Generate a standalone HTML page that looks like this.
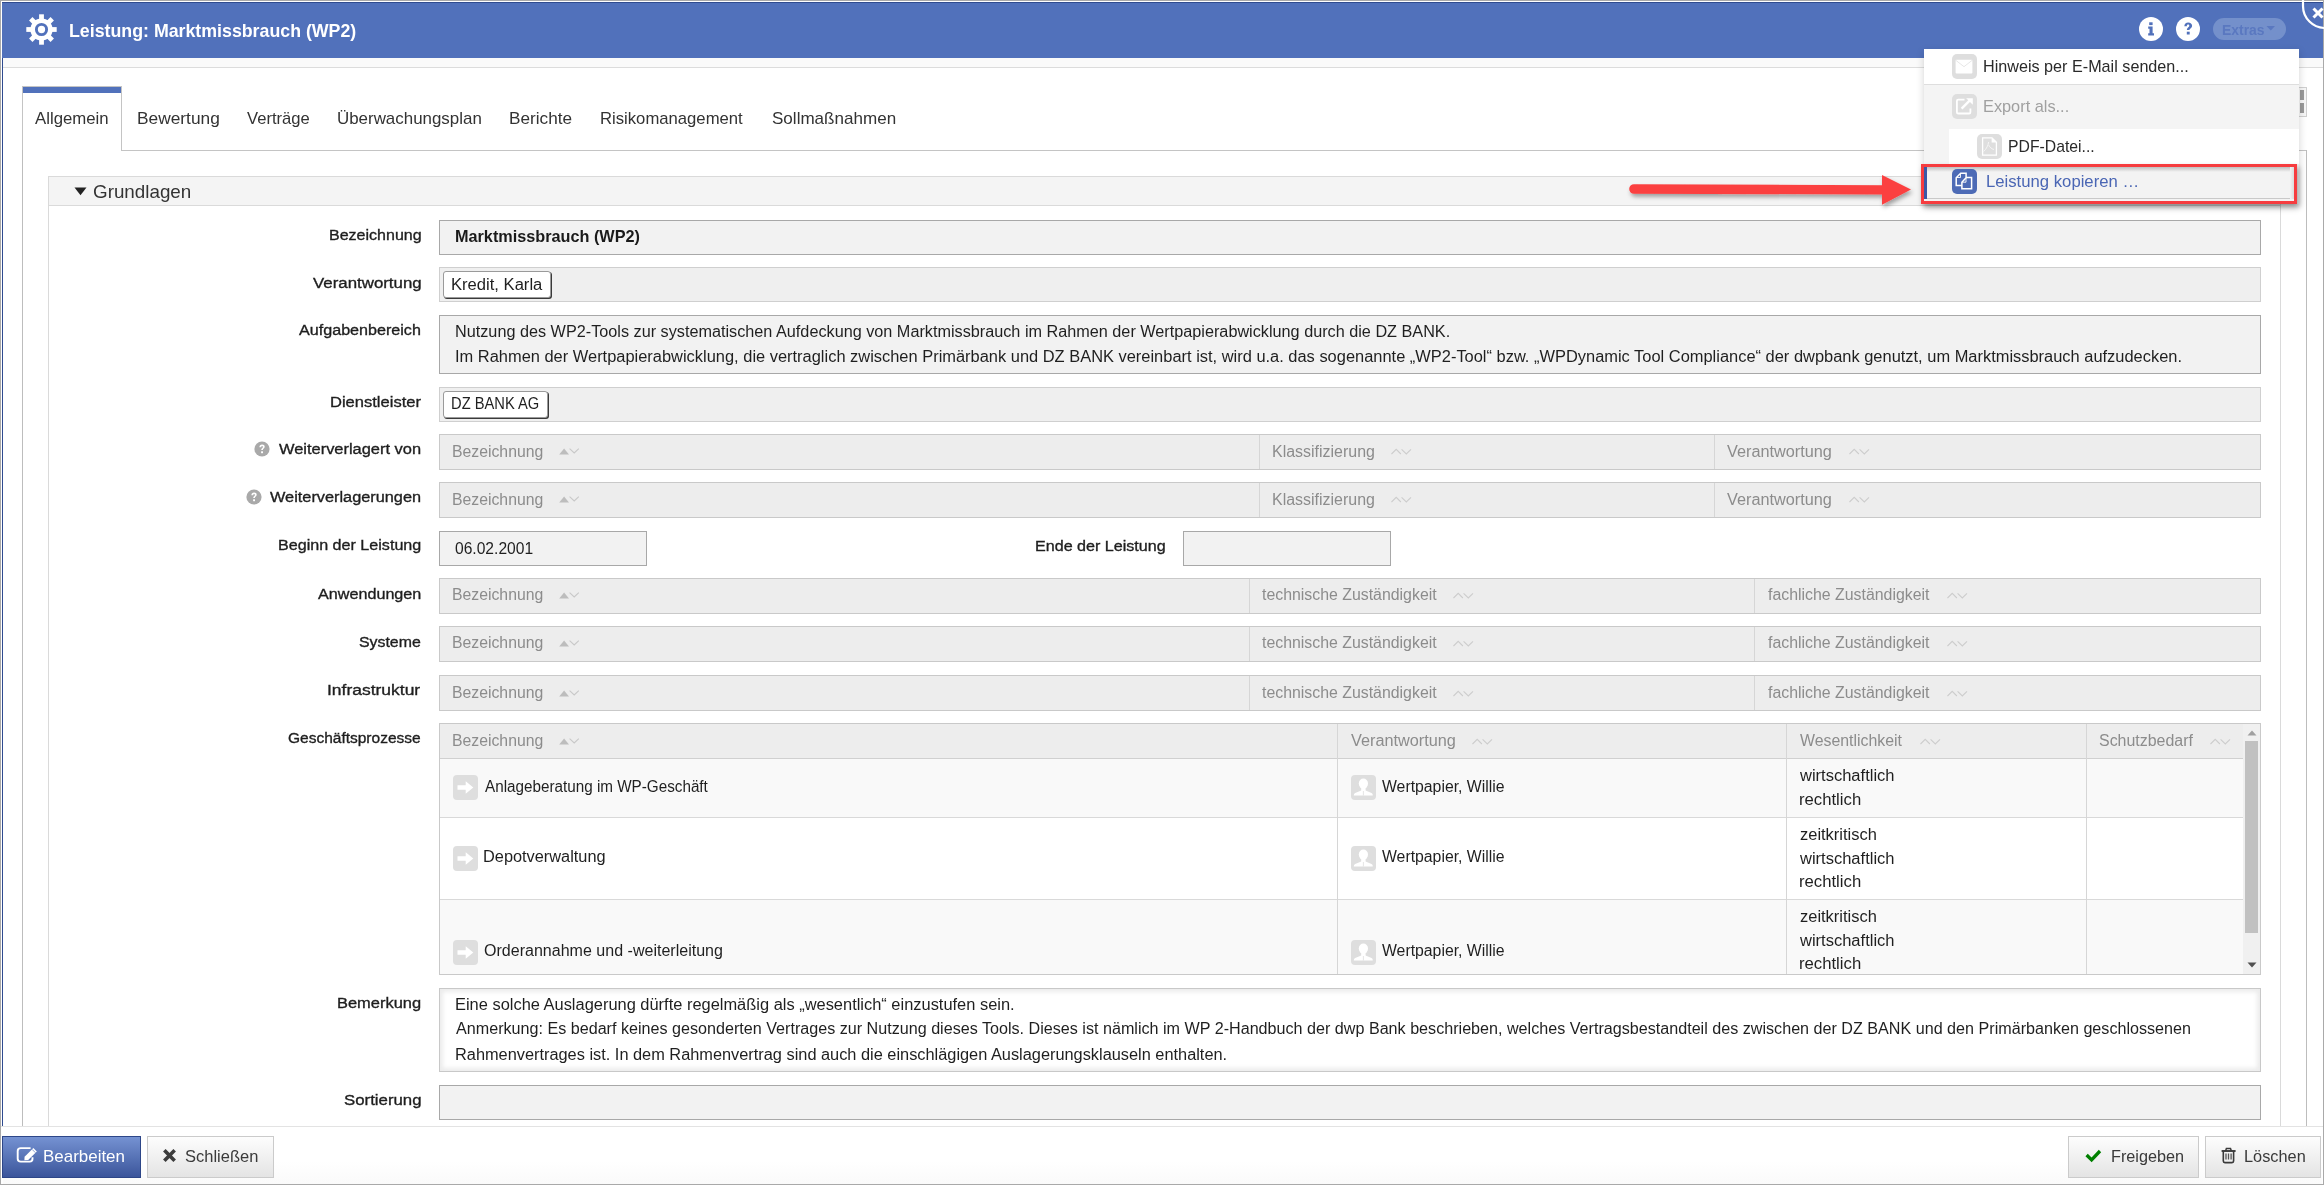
<!DOCTYPE html>
<html><head><meta charset="utf-8"><title>Leistung: Marktmissbrauch (WP2)</title>
<style>
html,body{margin:0;padding:0;}
body{width:2324px;height:1185px;position:relative;overflow:hidden;background:#fff;font-family:"Liberation Sans",sans-serif;}
.a{position:absolute;box-sizing:border-box;}
.t{position:absolute;white-space:pre;transform-origin:0 0;font-family:"Liberation Sans",sans-serif;}
.fld{position:absolute;box-sizing:border-box;background:#f2f2f2;border:1px solid #a8a8a8;}
.fl2{position:absolute;box-sizing:border-box;background:#efefef;border:1px solid #cfcfcf;}
.th{position:absolute;box-sizing:border-box;background:#ededed;border:1px solid #c9c9c9;}
.vd{position:absolute;width:1px;background:#d6d6d6;}
.hl{position:absolute;height:1px;background:#d9d9d9;}
.tag{position:absolute;box-sizing:border-box;background:#fff;border:1px solid #9a9a9a;border-radius:3px;box-shadow:1px 1px 0 #3a3a3a;}
.ico{position:absolute;}
</style></head><body>
<!-- window frame -->
<div class=a style="left:0;top:0;width:2324px;height:1185px;border:1px solid #a9a9a9;"></div>
<!-- left blue content border -->
<div class=a style="left:2px;top:2px;width:1px;height:1124px;background:#2f4b8f;"></div>
<!-- header -->
<div class=a style="left:2px;top:2px;width:2321px;height:56px;background:#5171bb;border-top:1px solid #2f4b8f;"></div>
<!-- strip under header -->
<div class=a style="left:3px;top:58px;width:2320px;height:10px;background:#fafafa;border-bottom:1px solid #dcdcdc;"></div>
<!-- gear icon -->
<svg class=ico style="left:26px;top:14px" width="31" height="31" viewBox="-15.5 -15.5 31 31">
 <g fill="#fff">
  <circle r="11.1"/>
  <rect x="-2.4" y="-15.2" width="4.8" height="7" />
  <rect x="-2.4" y="-15.2" width="4.8" height="7" transform="rotate(45)"/>
  <rect x="-2.4" y="-15.2" width="4.8" height="7" transform="rotate(90)"/>
  <rect x="-2.4" y="-15.2" width="4.8" height="7" transform="rotate(135)"/>
  <rect x="-2.4" y="-15.2" width="4.8" height="7" transform="rotate(180)"/>
  <rect x="-2.4" y="-15.2" width="4.8" height="7" transform="rotate(225)"/>
  <rect x="-2.4" y="-15.2" width="4.8" height="7" transform="rotate(270)"/>
  <rect x="-2.4" y="-15.2" width="4.8" height="7" transform="rotate(315)"/>
 </g>
 <circle r="5.1" fill="none" stroke="#5171bb" stroke-width="2.9"/>
</svg>
<!-- info / help -->
<div class=a style="left:2139px;top:17px;width:24px;height:24px;border-radius:50%;background:#fff;"></div>
<svg class=ico style="left:2139px;top:17px" width="24" height="24" viewBox="0 0 24 24">
 <rect x="10.2" y="5.3" width="3.4" height="2.8" fill="#5171bb"/>
 <path d="M9.2 9.6h4.4v6.6h1.4v2.2H9.2v-2.2h1.3v-4.4H9.2z" fill="#5171bb"/>
</svg>
<div class=a style="left:2176px;top:17px;width:24px;height:24px;border-radius:50%;background:#fff;"></div>
<svg class=ico style="left:2176px;top:17px" width="24" height="24" viewBox="0 0 24 24">
 <path d="M8.3 9.2c0-2.4 1.7-3.8 3.9-3.8 2.3 0 3.9 1.3 3.9 3.3 0 2.4-2.6 2.7-2.6 4.4h-2.6c0-2.6 2.4-2.9 2.4-4.3 0-.8-.5-1.3-1.2-1.3-.8 0-1.3.6-1.3 1.7z" fill="#5171bb"/>
 <rect x="10.8" y="14.7" width="2.9" height="2.8" fill="#5171bb"/>
</svg>
<!-- extras pill -->
<div class=a style="left:2213px;top:18px;width:73px;height:22px;border-radius:11px;background:#7490cb;"></div>
<svg class=ico style="left:2266px;top:25px" width="10" height="7" viewBox="0 0 10 7"><path d="M0.5 1h8.5L4.75 5.5z" fill="#5a78c0"/></svg>
<!-- close -->
<svg class=ico style="left:2290px;top:0px" width="34" height="34" viewBox="0 0 34 34">
 <path d="M13 0V6A22 22 0 0 0 35 28" fill="none" stroke="#fff" stroke-width="2.2"/>
 <path d="M23.5 8.5l9 9M32.5 8.5l-9 9" stroke="#fff" stroke-width="3"/>
</svg>

<!-- tab strip -->
<div class=a style="left:22px;top:86px;width:100px;height:65px;border:1px solid #c4c4c4;border-bottom:none;background:#fff;"></div>
<div class=a style="left:23px;top:87px;width:98px;height:6px;background:#5171bb;"></div>
<div class=a style="left:121px;top:150px;width:2186px;height:1px;background:#c4c4c4;"></div>
<div class=a style="left:22px;top:150px;width:1px;height:976px;background:#bdbdbd;"></div>
<div class=a style="left:2306px;top:150px;width:1px;height:976px;background:#bdbdbd;"></div>
<!-- small scroll element right of tabs -->
<div class=a style="left:2297px;top:87px;width:10px;height:30px;border:1px solid #d0d0d0;background:#f7f7f7;"></div>
<div class=a style="left:2300px;top:90px;width:4px;height:10px;background:#9a9a9a;"></div>
<div class=a style="left:2300px;top:103px;width:4px;height:10px;background:#9a9a9a;"></div>

<!-- section panel -->
<div class=a style="left:48px;top:176px;width:2233px;height:960px;border:1px solid #dadada;"></div>
<div class=a style="left:49px;top:177px;width:2231px;height:29px;background:#f4f4f4;border-bottom:1px solid #dadada;"></div>
<svg class=ico style="left:74px;top:187px" width="13" height="9" viewBox="0 0 13 9"><path d="M0.5 0.5h12L6.5 8.3z" fill="#222"/></svg>

<!-- footer -->
<div class=a style="left:1px;top:1126px;width:2322px;height:58px;background:#fff;border-top:1px solid #e3e3e3;"></div>
<div class=a style="left:3px;top:1127px;width:2319px;height:57px;background:linear-gradient(#fff 0%,#fff 60%,#fafafa 100%);"></div>

<!-- fields -->
<div class=fld style="left:439px;top:220px;width:1822px;height:35px;"></div>
<div class=fl2 style="left:439px;top:267px;width:1822px;height:35px;"></div>
<div class=tag style="left:443px;top:271px;width:108px;height:27px;"></div>
<div class=fld style="left:439px;top:315px;width:1822px;height:59px;"></div>
<div class=fl2 style="left:439px;top:387px;width:1822px;height:35px;"></div>
<div class=tag style="left:443px;top:391px;width:105px;height:27px;"></div>

<!-- table headers simple -->
<div class=th style="left:439px;top:434px;width:1822px;height:36px;"></div>
<div class=vd style="left:1259px;top:435px;height:34px;"></div>
<div class=vd style="left:1714px;top:435px;height:34px;"></div>
<div class=th style="left:439px;top:482px;width:1822px;height:36px;"></div>
<div class=vd style="left:1259px;top:483px;height:34px;"></div>
<div class=vd style="left:1714px;top:483px;height:34px;"></div>

<div class=fld style="left:439px;top:531px;width:208px;height:35px;"></div>
<div class=fld style="left:1183px;top:531px;width:208px;height:35px;"></div>

<div class=th style="left:439px;top:578px;width:1822px;height:36px;"></div>
<div class=vd style="left:1249px;top:579px;height:34px;"></div>
<div class=vd style="left:1754px;top:579px;height:34px;"></div>
<div class=th style="left:439px;top:626px;width:1822px;height:36px;"></div>
<div class=vd style="left:1249px;top:627px;height:34px;"></div>
<div class=vd style="left:1754px;top:627px;height:34px;"></div>
<div class=th style="left:439px;top:675px;width:1822px;height:36px;"></div>
<div class=vd style="left:1249px;top:676px;height:34px;"></div>
<div class=vd style="left:1754px;top:676px;height:34px;"></div>

<!-- Geschaeftsprozesse table -->
<div class=a style="left:439px;top:723px;width:1822px;height:252px;border:1px solid #c9c9c9;background:#fff;"></div>
<div class=a style="left:440px;top:724px;width:1803px;height:35px;background:#ededed;border-bottom:1px solid #d0d0d0;"></div>
<div class=a style="left:440px;top:759px;width:1803px;height:58px;background:#f9f9f9;"></div>
<div class=hl style="left:440px;top:817px;width:1803px;"></div>
<div class=hl style="left:440px;top:899px;width:1803px;"></div>
<div class=a style="left:440px;top:900px;width:1803px;height:74px;background:#f9f9f9;"></div>
<div class=vd style="left:1337px;top:724px;height:250px;"></div>
<div class=vd style="left:1786px;top:724px;height:250px;"></div>
<div class=vd style="left:2086px;top:724px;height:250px;"></div>
<!-- scrollbar -->
<div class=a style="left:2243px;top:724px;width:17px;height:250px;background:#f0f0f0;"></div>
<div class=a style="left:2245px;top:741px;width:13px;height:192px;background:#c1c1c1;"></div>
<svg class=ico style="left:2247px;top:729px" width="10" height="8" viewBox="0 0 10 8"><path d="M0.5 6.5h9L5 1.5z" fill="#a0a0a0"/></svg>
<svg class=ico style="left:2247px;top:961px" width="10" height="8" viewBox="0 0 10 8"><path d="M0.5 1.5h9L5 6.5z" fill="#505050"/></svg>

<!-- Bemerkung -->
<div class=a style="left:439px;top:988px;width:1822px;height:84px;border:1px solid #c8c8c8;background:#fff;box-shadow:inset 0 0 4px 3px #ececec;"></div>
<div class=fld style="left:439px;top:1085px;width:1822px;height:35px;"></div>
<!-- ============ sort icons ============ -->
<svg class=ico style="left:559px;top:448px" width="22" height="8" viewBox="0 0 22 8"><path d="M0.2 6.4L5.1 0.4L10 6.4z" fill="#bdbdbd"/><path d="M10.6 0.6L15.2 5L19.8 0.6" fill="none" stroke="#c8c8c8" stroke-width="1.1"/></svg>
<svg class=ico style="left:1391px;top:448px" width="22" height="8" viewBox="0 0 22 8"><path d="M0.5 6L5.2 1.3L9.9 6" fill="none" stroke="#cdcdcd" stroke-width="1.1"/><path d="M10.6 1.3L15.3 6L20 1.3" fill="none" stroke="#cdcdcd" stroke-width="1.1"/></svg>
<svg class=ico style="left:1849px;top:448px" width="22" height="8" viewBox="0 0 22 8"><path d="M0.5 6L5.2 1.3L9.9 6" fill="none" stroke="#cdcdcd" stroke-width="1.1"/><path d="M10.6 1.3L15.3 6L20 1.3" fill="none" stroke="#cdcdcd" stroke-width="1.1"/></svg>
<svg class=ico style="left:559px;top:496px" width="22" height="8" viewBox="0 0 22 8"><path d="M0.2 6.4L5.1 0.4L10 6.4z" fill="#bdbdbd"/><path d="M10.6 0.6L15.2 5L19.8 0.6" fill="none" stroke="#c8c8c8" stroke-width="1.1"/></svg>
<svg class=ico style="left:1391px;top:496px" width="22" height="8" viewBox="0 0 22 8"><path d="M0.5 6L5.2 1.3L9.9 6" fill="none" stroke="#cdcdcd" stroke-width="1.1"/><path d="M10.6 1.3L15.3 6L20 1.3" fill="none" stroke="#cdcdcd" stroke-width="1.1"/></svg>
<svg class=ico style="left:1849px;top:496px" width="22" height="8" viewBox="0 0 22 8"><path d="M0.5 6L5.2 1.3L9.9 6" fill="none" stroke="#cdcdcd" stroke-width="1.1"/><path d="M10.6 1.3L15.3 6L20 1.3" fill="none" stroke="#cdcdcd" stroke-width="1.1"/></svg>
<svg class=ico style="left:559px;top:592px" width="22" height="8" viewBox="0 0 22 8"><path d="M0.2 6.4L5.1 0.4L10 6.4z" fill="#bdbdbd"/><path d="M10.6 0.6L15.2 5L19.8 0.6" fill="none" stroke="#c8c8c8" stroke-width="1.1"/></svg>
<svg class=ico style="left:1453px;top:592px" width="22" height="8" viewBox="0 0 22 8"><path d="M0.5 6L5.2 1.3L9.9 6" fill="none" stroke="#cdcdcd" stroke-width="1.1"/><path d="M10.6 1.3L15.3 6L20 1.3" fill="none" stroke="#cdcdcd" stroke-width="1.1"/></svg>
<svg class=ico style="left:1947px;top:592px" width="22" height="8" viewBox="0 0 22 8"><path d="M0.5 6L5.2 1.3L9.9 6" fill="none" stroke="#cdcdcd" stroke-width="1.1"/><path d="M10.6 1.3L15.3 6L20 1.3" fill="none" stroke="#cdcdcd" stroke-width="1.1"/></svg>
<svg class=ico style="left:559px;top:640px" width="22" height="8" viewBox="0 0 22 8"><path d="M0.2 6.4L5.1 0.4L10 6.4z" fill="#bdbdbd"/><path d="M10.6 0.6L15.2 5L19.8 0.6" fill="none" stroke="#c8c8c8" stroke-width="1.1"/></svg>
<svg class=ico style="left:1453px;top:640px" width="22" height="8" viewBox="0 0 22 8"><path d="M0.5 6L5.2 1.3L9.9 6" fill="none" stroke="#cdcdcd" stroke-width="1.1"/><path d="M10.6 1.3L15.3 6L20 1.3" fill="none" stroke="#cdcdcd" stroke-width="1.1"/></svg>
<svg class=ico style="left:1947px;top:640px" width="22" height="8" viewBox="0 0 22 8"><path d="M0.5 6L5.2 1.3L9.9 6" fill="none" stroke="#cdcdcd" stroke-width="1.1"/><path d="M10.6 1.3L15.3 6L20 1.3" fill="none" stroke="#cdcdcd" stroke-width="1.1"/></svg>
<svg class=ico style="left:559px;top:690px" width="22" height="8" viewBox="0 0 22 8"><path d="M0.2 6.4L5.1 0.4L10 6.4z" fill="#bdbdbd"/><path d="M10.6 0.6L15.2 5L19.8 0.6" fill="none" stroke="#c8c8c8" stroke-width="1.1"/></svg>
<svg class=ico style="left:1453px;top:690px" width="22" height="8" viewBox="0 0 22 8"><path d="M0.5 6L5.2 1.3L9.9 6" fill="none" stroke="#cdcdcd" stroke-width="1.1"/><path d="M10.6 1.3L15.3 6L20 1.3" fill="none" stroke="#cdcdcd" stroke-width="1.1"/></svg>
<svg class=ico style="left:1947px;top:690px" width="22" height="8" viewBox="0 0 22 8"><path d="M0.5 6L5.2 1.3L9.9 6" fill="none" stroke="#cdcdcd" stroke-width="1.1"/><path d="M10.6 1.3L15.3 6L20 1.3" fill="none" stroke="#cdcdcd" stroke-width="1.1"/></svg>
<svg class=ico style="left:559px;top:738px" width="22" height="8" viewBox="0 0 22 8"><path d="M0.2 6.4L5.1 0.4L10 6.4z" fill="#bdbdbd"/><path d="M10.6 0.6L15.2 5L19.8 0.6" fill="none" stroke="#c8c8c8" stroke-width="1.1"/></svg>
<svg class=ico style="left:1472px;top:738px" width="22" height="8" viewBox="0 0 22 8"><path d="M0.5 6L5.2 1.3L9.9 6" fill="none" stroke="#cdcdcd" stroke-width="1.1"/><path d="M10.6 1.3L15.3 6L20 1.3" fill="none" stroke="#cdcdcd" stroke-width="1.1"/></svg>
<svg class=ico style="left:1920px;top:738px" width="22" height="8" viewBox="0 0 22 8"><path d="M0.5 6L5.2 1.3L9.9 6" fill="none" stroke="#cdcdcd" stroke-width="1.1"/><path d="M10.6 1.3L15.3 6L20 1.3" fill="none" stroke="#cdcdcd" stroke-width="1.1"/></svg>
<svg class=ico style="left:2210px;top:738px" width="22" height="8" viewBox="0 0 22 8"><path d="M0.5 6L5.2 1.3L9.9 6" fill="none" stroke="#cdcdcd" stroke-width="1.1"/><path d="M10.6 1.3L15.3 6L20 1.3" fill="none" stroke="#cdcdcd" stroke-width="1.1"/></svg>
<!-- question icons -->
<svg class=ico style="left:254px;top:441px" width="16" height="16" viewBox="0 0 16 16"><circle cx="8" cy="8" r="7.6" fill="#a9a9a9"/><path d="M5.4 6.2c0-1.6 1.1-2.6 2.7-2.6 1.6 0 2.6.9 2.6 2.2 0 1.6-1.8 1.8-1.8 3.1H7.2c0-1.8 1.7-2 1.7-3 0-.5-.3-.9-.8-.9-.6 0-.9.4-.9 1.2z" fill="#fff"/><rect x="7.1" y="10.3" width="1.9" height="1.9" fill="#fff"/></svg>
<svg class=ico style="left:246px;top:489px" width="16" height="16" viewBox="0 0 16 16"><circle cx="8" cy="8" r="7.6" fill="#a9a9a9"/><path d="M5.4 6.2c0-1.6 1.1-2.6 2.7-2.6 1.6 0 2.6.9 2.6 2.2 0 1.6-1.8 1.8-1.8 3.1H7.2c0-1.8 1.7-2 1.7-3 0-.5-.3-.9-.8-.9-.6 0-.9.4-.9 1.2z" fill="#fff"/><rect x="7.1" y="10.3" width="1.9" height="1.9" fill="#fff"/></svg>
<svg class=ico style="left:453px;top:775px" width="25" height="25" viewBox="0 0 25 25"><rect x="0" y="0" width="25" height="25" rx="4" fill="#dedede"/><path d="M4.5 10.3h8.2V6.2l7.6 6.3-7.6 6.3v-4.1H4.5z" fill="#fff"/></svg>
<svg class=ico style="left:1351px;top:775px" width="25" height="25" viewBox="0 0 25 25"><rect x="0" y="0" width="25" height="25" rx="4" fill="#dedede"/><ellipse cx="12.4" cy="8.6" rx="4.6" ry="5" fill="#fff"/><path d="M10.2 13h4.4v2.6l5.9 2.4c1 .4 1.3 1.3 1.3 2.6H2.8c0-1.3.4-2.2 1.4-2.6l6-2.4z" fill="#fff"/><path d="M12.4 16v4.6" stroke="#dedede" stroke-width="0.8"/></svg>
<svg class=ico style="left:453px;top:846px" width="25" height="25" viewBox="0 0 25 25"><rect x="0" y="0" width="25" height="25" rx="4" fill="#dedede"/><path d="M4.5 10.3h8.2V6.2l7.6 6.3-7.6 6.3v-4.1H4.5z" fill="#fff"/></svg>
<svg class=ico style="left:1351px;top:846px" width="25" height="25" viewBox="0 0 25 25"><rect x="0" y="0" width="25" height="25" rx="4" fill="#dedede"/><ellipse cx="12.4" cy="8.6" rx="4.6" ry="5" fill="#fff"/><path d="M10.2 13h4.4v2.6l5.9 2.4c1 .4 1.3 1.3 1.3 2.6H2.8c0-1.3.4-2.2 1.4-2.6l6-2.4z" fill="#fff"/><path d="M12.4 16v4.6" stroke="#dedede" stroke-width="0.8"/></svg>
<svg class=ico style="left:453px;top:940px" width="25" height="25" viewBox="0 0 25 25"><rect x="0" y="0" width="25" height="25" rx="4" fill="#dedede"/><path d="M4.5 10.3h8.2V6.2l7.6 6.3-7.6 6.3v-4.1H4.5z" fill="#fff"/></svg>
<svg class=ico style="left:1351px;top:940px" width="25" height="25" viewBox="0 0 25 25"><rect x="0" y="0" width="25" height="25" rx="4" fill="#dedede"/><ellipse cx="12.4" cy="8.6" rx="4.6" ry="5" fill="#fff"/><path d="M10.2 13h4.4v2.6l5.9 2.4c1 .4 1.3 1.3 1.3 2.6H2.8c0-1.3.4-2.2 1.4-2.6l6-2.4z" fill="#fff"/><path d="M12.4 16v4.6" stroke="#dedede" stroke-width="0.8"/></svg>
<!-- ============ dropdown ============ -->
<div class=a style="left:1924px;top:49px;width:375px;height:155px;background:#f4f4f4;box-shadow:0 3px 8px rgba(0,0,0,.18);"></div>
<div class=a style="left:1924px;top:49px;width:375px;height:36px;background:#fff;border-bottom:1px solid #dedede;"></div>
<div class=a style="left:1949px;top:129px;width:350px;height:35px;background:#fff;"></div>
<svg class=ico style="left:1952px;top:54px" width="25" height="25" viewBox="0 0 25 25"><rect width="25" height="25" rx="5" fill="#dedede"/><rect x="3.6" y="5.8" width="16.8" height="13.6" rx="1" fill="#fff"/><path d="M3.8 6.3l8.2 6.4 8.2-6.4" fill="none" stroke="#e4e4e4" stroke-width="0.9"/></svg>
<svg class=ico style="left:1952px;top:94px" width="25" height="25" viewBox="0 0 25 25"><rect width="25" height="25" rx="5" fill="#dedede"/><path d="M12.5 5.6H6.2c-.8 0-1.3.5-1.3 1.3v11.3c0 .8.5 1.3 1.3 1.3h10.9c.8 0 1.3-.5 1.3-1.3v-3.6" fill="none" stroke="#fff" stroke-width="1.8"/><path d="M9.6 14.6l9-9" stroke="#fff" stroke-width="2.4"/><path d="M14.2 4.2h6.6v6.6z" fill="#fff"/></svg>
<svg class=ico style="left:1977px;top:134px" width="25" height="25" viewBox="0 0 25 25"><rect width="25" height="25" rx="5" fill="#dedede"/><path d="M5.6 3.9h9.4l4.4 4.4v12.8H5.6z" fill="none" stroke="#fff" stroke-width="1.3"/><path d="M14.6 4v4.6h4.6" fill="#fff"/><path d="M11.6 8c-.2 3-2.2 7-5 9.5M11.8 11.2c1 2.2 3 3.8 5.2 4.3" fill="none" stroke="#f6f6f6" stroke-width="0.9"/></svg>
<!-- highlighted item -->
<div class=a style="left:1924px;top:164px;width:372px;height:40px;background:#f3f3f3;"></div><div class=a style="left:1924px;top:164px;width:372px;height:35px;background:#f3f3f3;border-bottom:1px solid #c9c9c9;"></div><div class=a style="left:1924px;top:166px;width:372px;height:6px;background:linear-gradient(#b5b5b5,#f3f3f3);"></div><div class=a style="left:2290px;top:166px;width:6px;height:33px;background:linear-gradient(90deg,#f3f3f3,#cfcfcf);"></div>
<div class=a style="left:1924px;top:167px;width:3px;height:32px;background:#3b58a6;"></div>
<svg class=ico style="left:1952px;top:169px" width="25" height="25" viewBox="0 0 25 25"><rect width="25" height="25" rx="5" fill="#4d6bb6"/><path d="M9.8 16.6H4.2V8.7L8.7 4.2H14.1V8.6" fill="none" stroke="#fff" stroke-width="1.5"/><path d="M8.5 4.6V8.5H4.6" fill="none" stroke="#fff" stroke-width="0.9"/><path d="M9.9 13.3L14.3 8.6H19.6V19.8H9.9z" fill="#4d6bb6" stroke="#fff" stroke-width="1.5"/><path d="M14 9V13.2H10.2" fill="none" stroke="#fff" stroke-width="0.9"/></svg>
<!-- red box -->
<div class=a style="left:1921px;top:164px;width:376px;height:40px;border:3px solid #f63c3f;box-shadow:2px 3px 5px rgba(0,0,0,.35);"></div>
<!-- red arrow -->
<svg class=ico style="left:1620px;top:168px" width="300" height="46" viewBox="1620 168 300 46">
 <defs><filter id="sh" x="-10%" y="-50%" width="120%" height="200%"><feDropShadow dx="1.5" dy="3" stdDeviation="2" flood-color="#000" flood-opacity="0.35"/></filter></defs>
 <g filter="url(#sh)" fill="#fb4040">
  <path d="M1634 184.2L1884 185.3V194.4L1634 193.8A4.8 4.8 0 0 1 1634 184.2z"/>
  <path d="M1882 175.1L1911 189.6L1882 204.8z"/>
 </g>
</svg>
<!-- ============ buttons ============ -->
<div class=a style="left:2px;top:1136px;width:139px;height:42px;border:1px solid #2d4688;background:linear-gradient(#7592d2,#3b559b);"></div>
<svg class=ico style="left:16px;top:1146px" width="24" height="18" viewBox="0 0 24 18"><path d="M14.6 2.1H4.8C3 2.1 1.7 3.1 1.7 4.9V12.8C1.7 14.6 3 15.6 4.8 15.6H13.7C15.4 15.6 16.5 14.6 16.5 12.8V11.2" fill="none" stroke="#fff" stroke-width="1.9"/><path d="M17.4 2L20.8 5.4L12.2 14L8.4 14.3L8.6 10.8z" fill="#fff"/><path d="M16.1 3.4l3.3 3.3" stroke="#5b78bd" stroke-width="0.7"/></svg>
<div class=a style="left:147px;top:1136px;width:127px;height:42px;border:1px solid #cbcbcb;background:linear-gradient(#fdfdfd,#e4e4e4);"></div>
<svg class=ico style="left:163px;top:1149px" width="14" height="14" viewBox="0 0 14 14"><path d="M2.6 2.6L10.4 10.4M10.4 2.6L2.6 10.4" stroke="#3c3c3c" stroke-width="3.6" stroke-linecap="square"/></svg>
<div class=a style="left:2068px;top:1136px;width:131px;height:42px;border:1px solid #cbcbcb;background:linear-gradient(#fdfdfd,#e4e4e4);"></div>
<svg class=ico style="left:2084px;top:1148px" width="18" height="16" viewBox="0 0 18 16"><path d="M2.6 7L7.6 11.9L16 3" fill="none" stroke="#008000" stroke-width="3.3"/></svg>
<div class=a style="left:2205px;top:1136px;width:116px;height:42px;border:1px solid #cbcbcb;background:linear-gradient(#fdfdfd,#e4e4e4);"></div>
<svg class=ico style="left:2220px;top:1146px" width="17" height="19" viewBox="0 0 17 19"><path d="M1.6 5H15.6" stroke="#3a3a3a" stroke-width="1.9"/><path d="M5.6 5L6.4 2.4H10.5L11.4 5" fill="none" stroke="#3a3a3a" stroke-width="1.5"/><path d="M3.3 5V15C3.3 16 3.9 16.6 4.9 16.6H12C13 16.6 13.6 16 13.6 15V5" fill="none" stroke="#3a3a3a" stroke-width="1.6"/><path d="M6 7.6V13.5M8.5 7.6V13.5M11.1 7.6V13.5" stroke="#555" stroke-width="1.3"/></svg>
<span class=t style="left:69.13px;top:21px;font-size:19px;line-height:19px;font-weight:bold;color:#ffffff;transform:scaleX(0.9351);">Leistung: Marktmissbrauch (WP2)</span>
<span class=t style="left:35.18px;top:110px;font-size:17px;line-height:17px;font-weight:normal;color:#333333;transform:scaleX(0.9867);">Allgemein</span>
<span class=t style="left:136.50px;top:110px;font-size:17px;line-height:17px;font-weight:normal;color:#333333;transform:scaleX(1.0184);">Bewertung</span>
<span class=t style="left:246.58px;top:110px;font-size:17px;line-height:17px;font-weight:normal;color:#333333;transform:scaleX(0.9767);">Verträge</span>
<span class=t style="left:336.66px;top:110px;font-size:17px;line-height:17px;font-weight:normal;color:#333333;transform:scaleX(0.9948);">Überwachungsplan</span>
<span class=t style="left:509.31px;top:110px;font-size:17px;line-height:17px;font-weight:normal;color:#333333;transform:scaleX(1.0108);">Berichte</span>
<span class=t style="left:599.85px;top:110px;font-size:17px;line-height:17px;font-weight:normal;color:#333333;transform:scaleX(0.9806);">Risikomanagement</span>
<span class=t style="left:771.55px;top:110px;font-size:17px;line-height:17px;font-weight:normal;color:#333333;transform:scaleX(1.0027);">Sollmaßnahmen</span>
<span class=t style="left:93.31px;top:183px;font-size:18.5px;line-height:18.5px;font-weight:normal;color:#333333;transform:scaleX(1.0166);">Grundlagen</span>
<span class=t style="left:328.71px;top:227px;font-size:15.5px;line-height:15.5px;font-weight:normal;color:#1e1e1e;transform:scaleX(1.0335);-webkit-text-stroke:0.35px #1e1e1e;">Bezeichnung</span>
<span class=t style="left:312.66px;top:275px;font-size:15.5px;line-height:15.5px;font-weight:normal;color:#1e1e1e;transform:scaleX(1.0872);-webkit-text-stroke:0.35px #1e1e1e;">Verantwortung</span>
<span class=t style="left:299.40px;top:322px;font-size:15.5px;line-height:15.5px;font-weight:normal;color:#1e1e1e;transform:scaleX(1.0400);-webkit-text-stroke:0.35px #1e1e1e;">Aufgabenbereich</span>
<span class=t style="left:329.67px;top:394px;font-size:15.5px;line-height:15.5px;font-weight:normal;color:#1e1e1e;transform:scaleX(1.0663);-webkit-text-stroke:0.35px #1e1e1e;">Dienstleister</span>
<span class=t style="left:279.27px;top:441px;font-size:15.5px;line-height:15.5px;font-weight:normal;color:#1e1e1e;transform:scaleX(1.0594);-webkit-text-stroke:0.35px #1e1e1e;">Weiterverlagert von</span>
<span class=t style="left:270.27px;top:489px;font-size:15.5px;line-height:15.5px;font-weight:normal;color:#1e1e1e;transform:scaleX(1.0519);-webkit-text-stroke:0.35px #1e1e1e;">Weiterverlagerungen</span>
<span class=t style="left:278.10px;top:537px;font-size:15.5px;line-height:15.5px;font-weight:normal;color:#1e1e1e;transform:scaleX(1.0389);-webkit-text-stroke:0.35px #1e1e1e;">Beginn der Leistung</span>
<span class=t style="left:318.00px;top:586px;font-size:15.5px;line-height:15.5px;font-weight:normal;color:#1e1e1e;transform:scaleX(1.0425);-webkit-text-stroke:0.35px #1e1e1e;">Anwendungen</span>
<span class=t style="left:359.23px;top:634px;font-size:15.5px;line-height:15.5px;font-weight:normal;color:#1e1e1e;transform:scaleX(1.0242);-webkit-text-stroke:0.35px #1e1e1e;">Systeme</span>
<span class=t style="left:327.35px;top:682px;font-size:15.5px;line-height:15.5px;font-weight:normal;color:#1e1e1e;transform:scaleX(1.1267);-webkit-text-stroke:0.35px #1e1e1e;">Infrastruktur</span>
<span class=t style="left:288.35px;top:730px;font-size:15.5px;line-height:15.5px;font-weight:normal;color:#1e1e1e;transform:scaleX(0.9996);-webkit-text-stroke:0.35px #1e1e1e;">Geschäftsprozesse</span>
<span class=t style="left:337.27px;top:995px;font-size:15.5px;line-height:15.5px;font-weight:normal;color:#1e1e1e;transform:scaleX(1.0610);-webkit-text-stroke:0.35px #1e1e1e;">Bemerkung</span>
<span class=t style="left:343.89px;top:1092px;font-size:15.5px;line-height:15.5px;font-weight:normal;color:#1e1e1e;transform:scaleX(1.0839);-webkit-text-stroke:0.35px #1e1e1e;">Sortierung</span>
<span class=t style="left:1035.10px;top:538px;font-size:15.5px;line-height:15.5px;font-weight:normal;color:#1e1e1e;transform:scaleX(1.0389);-webkit-text-stroke:0.35px #1e1e1e;">Ende der Leistung</span>
<span class=t style="left:454.89px;top:228px;font-size:16.5px;line-height:16.5px;font-weight:bold;color:#1a1a1a;transform:scaleX(0.9839);">Marktmissbrauch (WP2)</span>
<span class=t style="left:451.10px;top:277px;font-size:16px;line-height:16px;font-weight:normal;color:#1f1f1f;transform:scaleX(1.0371);">Kredit, Karla</span>
<span class=t style="left:455.13px;top:324px;font-size:16px;line-height:16px;font-weight:normal;color:#1f1f1f;transform:scaleX(1.0140);">Nutzung des WP2-Tools zur systematischen Aufdeckung von Marktmissbrauch im Rahmen der Wertpapierabwicklung durch die DZ BANK.</span>
<span class=t style="left:454.86px;top:349px;font-size:16px;line-height:16px;font-weight:normal;color:#1f1f1f;transform:scaleX(1.0268);">Im Rahmen der Wertpapierabwicklung, die vertraglich zwischen Primärbank und DZ BANK vereinbart ist, wird u.a. das sogenannte „WP2-Tool“ bzw. „WPDynamic Tool Compliance“ der dwpbank genutzt, um Marktmissbrauch aufzudecken.</span>
<span class=t style="left:451.45px;top:396px;font-size:16px;line-height:16px;font-weight:normal;color:#1f1f1f;transform:scaleX(0.9196);">DZ BANK AG</span>
<span class=t style="left:455.39px;top:541px;font-size:16px;line-height:16px;font-weight:normal;color:#1f1f1f;transform:scaleX(0.9752);">06.02.2001</span>
<span class=t style="left:452.27px;top:444px;font-size:16px;line-height:16px;font-weight:normal;color:#8c8c8c;transform:scaleX(0.9861);">Bezeichnung</span>
<span class=t style="left:1272.05px;top:444px;font-size:16px;line-height:16px;font-weight:normal;color:#8c8c8c;transform:scaleX(0.9973);">Klassifizierung</span>
<span class=t style="left:1727.37px;top:444px;font-size:16px;line-height:16px;font-weight:normal;color:#8c8c8c;transform:scaleX(1.0167);">Verantwortung</span>
<span class=t style="left:452.27px;top:492px;font-size:16px;line-height:16px;font-weight:normal;color:#8c8c8c;transform:scaleX(0.9861);">Bezeichnung</span>
<span class=t style="left:1272.05px;top:492px;font-size:16px;line-height:16px;font-weight:normal;color:#8c8c8c;transform:scaleX(0.9973);">Klassifizierung</span>
<span class=t style="left:1727.37px;top:492px;font-size:16px;line-height:16px;font-weight:normal;color:#8c8c8c;transform:scaleX(1.0167);">Verantwortung</span>
<span class=t style="left:452.27px;top:587px;font-size:16px;line-height:16px;font-weight:normal;color:#8c8c8c;transform:scaleX(0.9861);">Bezeichnung</span>
<span class=t style="left:1262.35px;top:587px;font-size:16px;line-height:16px;font-weight:normal;color:#8c8c8c;transform:scaleX(0.9917);">technische Zuständigkeit</span>
<span class=t style="left:1767.95px;top:587px;font-size:16px;line-height:16px;font-weight:normal;color:#8c8c8c;transform:scaleX(0.9921);">fachliche Zuständigkeit</span>
<span class=t style="left:452.27px;top:635px;font-size:16px;line-height:16px;font-weight:normal;color:#8c8c8c;transform:scaleX(0.9861);">Bezeichnung</span>
<span class=t style="left:1262.35px;top:635px;font-size:16px;line-height:16px;font-weight:normal;color:#8c8c8c;transform:scaleX(0.9917);">technische Zuständigkeit</span>
<span class=t style="left:1767.95px;top:635px;font-size:16px;line-height:16px;font-weight:normal;color:#8c8c8c;transform:scaleX(0.9921);">fachliche Zuständigkeit</span>
<span class=t style="left:452.27px;top:685px;font-size:16px;line-height:16px;font-weight:normal;color:#8c8c8c;transform:scaleX(0.9861);">Bezeichnung</span>
<span class=t style="left:1262.35px;top:685px;font-size:16px;line-height:16px;font-weight:normal;color:#8c8c8c;transform:scaleX(0.9917);">technische Zuständigkeit</span>
<span class=t style="left:1767.95px;top:685px;font-size:16px;line-height:16px;font-weight:normal;color:#8c8c8c;transform:scaleX(0.9921);">fachliche Zuständigkeit</span>
<span class=t style="left:452.27px;top:733px;font-size:16px;line-height:16px;font-weight:normal;color:#8c8c8c;transform:scaleX(0.9861);">Bezeichnung</span>
<span class=t style="left:1350.87px;top:733px;font-size:16px;line-height:16px;font-weight:normal;color:#8c8c8c;transform:scaleX(1.0167);">Verantwortung</span>
<span class=t style="left:1800.28px;top:733px;font-size:16px;line-height:16px;font-weight:normal;color:#8c8c8c;transform:scaleX(0.9910);">Wesentlichkeit</span>
<span class=t style="left:2099.25px;top:733px;font-size:16px;line-height:16px;font-weight:normal;color:#8c8c8c;transform:scaleX(0.9965);">Schutzbedarf</span>
<span class=t style="left:484.60px;top:779px;font-size:16px;line-height:16px;font-weight:normal;color:#1f1f1f;transform:scaleX(0.9527);">Anlageberatung im WP-Geschäft</span>
<span class=t style="left:483.32px;top:849px;font-size:16px;line-height:16px;font-weight:normal;color:#1f1f1f;transform:scaleX(1.0208);">Depotverwaltung</span>
<span class=t style="left:483.85px;top:943px;font-size:16px;line-height:16px;font-weight:normal;color:#1f1f1f;transform:scaleX(1.0024);">Orderannahme und -weiterleitung</span>
<span class=t style="left:1382.28px;top:779px;font-size:16px;line-height:16px;font-weight:normal;color:#1f1f1f;transform:scaleX(0.9872);">Wertpapier, Willie</span>
<span class=t style="left:1382.28px;top:849px;font-size:16px;line-height:16px;font-weight:normal;color:#1f1f1f;transform:scaleX(0.9872);">Wertpapier, Willie</span>
<span class=t style="left:1382.28px;top:943px;font-size:16px;line-height:16px;font-weight:normal;color:#1f1f1f;transform:scaleX(0.9872);">Wertpapier, Willie</span>
<span class=t style="left:1800.40px;top:768px;font-size:16px;line-height:16px;font-weight:normal;color:#1f1f1f;transform:scaleX(1.0320);">wirtschaftlich</span>
<span class=t style="left:1799.36px;top:792px;font-size:16px;line-height:16px;font-weight:normal;color:#1f1f1f;transform:scaleX(1.0435);">rechtlich</span>
<span class=t style="left:1799.76px;top:827px;font-size:16px;line-height:16px;font-weight:normal;color:#1f1f1f;transform:scaleX(1.0288);">zeitkritisch</span>
<span class=t style="left:1800.40px;top:851px;font-size:16px;line-height:16px;font-weight:normal;color:#1f1f1f;transform:scaleX(1.0320);">wirtschaftlich</span>
<span class=t style="left:1799.36px;top:874px;font-size:16px;line-height:16px;font-weight:normal;color:#1f1f1f;transform:scaleX(1.0435);">rechtlich</span>
<span class=t style="left:1799.76px;top:909px;font-size:16px;line-height:16px;font-weight:normal;color:#1f1f1f;transform:scaleX(1.0288);">zeitkritisch</span>
<span class=t style="left:1800.40px;top:933px;font-size:16px;line-height:16px;font-weight:normal;color:#1f1f1f;transform:scaleX(1.0320);">wirtschaftlich</span>
<span class=t style="left:1799.36px;top:956px;font-size:16px;line-height:16px;font-weight:normal;color:#1f1f1f;transform:scaleX(1.0435);">rechtlich</span>
<span class=t style="left:455.12px;top:997px;font-size:16px;line-height:16px;font-weight:normal;color:#1f1f1f;transform:scaleX(1.0265);">Eine solche Auslagerung dürfte regelmäßig als „wesentlich“ einzustufen sein.</span>
<span class=t style="left:456.40px;top:1021px;font-size:16px;line-height:16px;font-weight:normal;color:#1f1f1f;transform:scaleX(1.0080);">Anmerkung: Es bedarf keines gesonderten Vertrages zur Nutzung dieses Tools. Dieses ist nämlich im WP 2-Handbuch der dwp Bank beschrieben, welches Vertragsbestandteil des zwischen der DZ BANK und den Primärbanken geschlossenen</span>
<span class=t style="left:455.12px;top:1047px;font-size:16px;line-height:16px;font-weight:normal;color:#1f1f1f;transform:scaleX(1.0213);">Rahmenvertrages ist. In dem Rahmenvertrag sind auch die einschlägigen Auslagerungsklauseln enthalten.</span>
<span class=t style="left:1982.59px;top:58px;font-size:17px;line-height:17px;font-weight:normal;color:#2a2a2a;transform:scaleX(0.9513);">Hinweis per E-Mail senden...</span>
<span class=t style="left:1983.28px;top:98px;font-size:17px;line-height:17px;font-weight:normal;color:#a0a0a0;transform:scaleX(0.9600);">Export als...</span>
<span class=t style="left:2007.73px;top:138px;font-size:17px;line-height:17px;font-weight:normal;color:#2a2a2a;transform:scaleX(0.9269);">PDF-Datei...</span>
<span class=t style="left:1986.15px;top:173px;font-size:17px;line-height:17px;font-weight:normal;color:#4a66b4;transform:scaleX(0.9819);">Leistung kopieren …</span>
<span class=t style="left:43.13px;top:1148px;font-size:17px;line-height:17px;font-weight:normal;color:#ffffff;transform:scaleX(0.9969);">Bearbeiten</span>
<span class=t style="left:185.17px;top:1148px;font-size:17px;line-height:17px;font-weight:normal;color:#3a3a3a;transform:scaleX(0.9708);">Schließen</span>
<span class=t style="left:2110.59px;top:1148px;font-size:17px;line-height:17px;font-weight:normal;color:#3a3a3a;transform:scaleX(0.9551);">Freigeben</span>
<span class=t style="left:2243.88px;top:1148px;font-size:17px;line-height:17px;font-weight:normal;color:#3a3a3a;transform:scaleX(0.9603);">Löschen</span>
<span class=t style="left:2222.07px;top:22px;font-size:15px;line-height:15px;font-weight:bold;color:#5a78c0;transform:scaleX(0.9266);">Extras</span>
</body></html>
